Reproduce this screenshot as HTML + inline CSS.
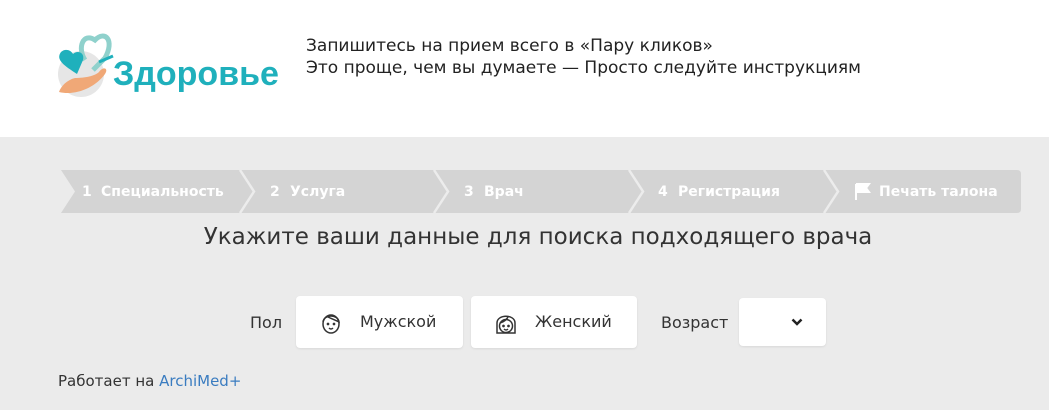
<!DOCTYPE html>
<html><head><meta charset="utf-8"><style>
*{margin:0;padding:0;box-sizing:border-box}
body{width:1049px;height:410px;overflow:hidden;background:#ebebeb;font-family:"DejaVu Sans","Liberation Sans",sans-serif;color:#333;position:relative}
.hdr{position:absolute;left:0;top:0;width:1049px;height:137px;background:#fff}
.t{position:absolute;white-space:nowrap}
.btn{position:absolute;background:#fff;border-radius:4px;box-shadow:0 1px 2px rgba(0,0,0,.08)}
</style></head><body>
<div class="hdr">
<svg style="position:absolute;left:55px;top:30px" width="230" height="72" viewBox="0 0 230 72">
<circle cx="26" cy="44" r="23" fill="#e6e6e6"/>
<path d="M30 30 C22 18 28 2 40 10 C50 0 60 10 50 28 L38 40" fill="none" stroke="#8fd1cc" stroke-width="5"/>
<path d="M22 44 C10 36 0 30 6 22 C10 18 16 20 18 24 C22 20 30 22 28 30 Z" fill="#1fb0bc"/>
<path d="M4 62 C20 66 40 58 50 44 C54 38 48 36 44 42 C40 46 30 48 20 48 C12 50 6 56 4 62 Z" fill="#f0a877"/>
<path d="M44 32 L58 26" stroke="#1fb0bc" stroke-width="3"/>
<text x="58" y="55" font-family="Liberation Sans" font-weight="bold" font-size="34" fill="#1fb0bc">Здоровье</text>
</svg>
<div class="t" style="left:306px;top:35px;font-size:17px;color:#222;line-height:22px">Запишитесь на прием всего в «Пару кликов»<br>Это проще, чем вы думаете — Просто следуйте инструкциям</div>
</div>
<svg style="position:absolute;left:0;top:170px" width="1049" height="43">
<path d="M61 0 H1017 Q1021 0 1021 4 V39 Q1021 43 1017 43 H61 L75 21.5 Z" fill="#d4d4d4"/>
<g stroke="#ececec" stroke-width="2.5" fill="none">
<path d="M240 0 L254 21.5 L240 43"/><path d="M434 0 L448 21.5 L434 43"/><path d="M629 0 L643 21.5 L629 43"/><path d="M824 0 L838 21.5 L824 43"/>
</g>
<g fill="#fff" font-family="DejaVu Sans" font-weight="bold" font-size="14">
<text x="82" y="26">1</text><text x="101" y="26">Специальность</text>
<text x="270" y="26">2</text><text x="290" y="26">Услуга</text>
<text x="464" y="26">3</text><text x="484" y="26">Врач</text>
<text x="658" y="26">4</text><text x="678" y="26">Регистрация</text>
<text x="879" y="26">Печать талона</text>
</g>
<path d="M856 14 V30 M856 14 H869 L866 18 L869 22 H856" stroke="#fff" stroke-width="2" fill="#fff"/>
</svg>
<div class="t" style="left:0;width:1076px;text-align:center;top:224px;font-size:23px;color:#333">Укажите ваши данные для поиска подходящего врача</div>
<div class="t" style="left:250px;top:313px;font-size:16px">Пол</div>
<div class="btn" style="left:296px;top:296px;width:167px;height:52px">
<svg style="position:absolute;left:24px;top:15px" width="22" height="24" viewBox="0 0 22 24" fill="none" stroke="#333" stroke-width="1.5"><ellipse cx="11" cy="13" rx="8" ry="9"/><path d="M3 11 C4 3 18 3 19 11 C15 9 10 7 8 6"/><circle cx="8" cy="13" r=".6" fill="#333"/><circle cx="14" cy="13" r=".6" fill="#333"/><path d="M9 17 Q11 19 13 17"/></svg>
<div class="t" style="left:64px;top:16px;font-size:16px">Мужской</div></div>
<div class="btn" style="left:471px;top:296px;width:166px;height:52px">
<svg style="position:absolute;left:24px;top:15px" width="22" height="24" viewBox="0 0 22 24" fill="none" stroke="#333" stroke-width="1.5"><path d="M2 22 V12 C2 3 20 3 20 12 V22 Z"/><ellipse cx="11" cy="15" rx="6.5" ry="6.5"/><path d="M5 12 C9 11 12 8 13 6"/><circle cx="8.5" cy="15" r=".6" fill="#333"/><circle cx="13.5" cy="15" r=".6" fill="#333"/><path d="M9 18 Q11 20 13 18"/></svg>
<div class="t" style="left:64px;top:16px;font-size:16px">Женский</div></div>
<div class="t" style="left:661px;top:313px;font-size:16px">Возраст</div>
<div class="btn" style="left:739px;top:298px;width:87px;height:48px">
<svg style="position:absolute;left:52px;top:20px" width="12" height="8" viewBox="0 0 12 8"><path d="M1.5 1.5 L6 6 L10.5 1.5" stroke="#222" stroke-width="2.5" fill="none"/></svg></div>
<div class="t" style="left:58px;top:372px;font-size:15px;color:#333">Работает на <span style="color:#3a7cc0">ArchiMed+</span></div>
</body></html>
